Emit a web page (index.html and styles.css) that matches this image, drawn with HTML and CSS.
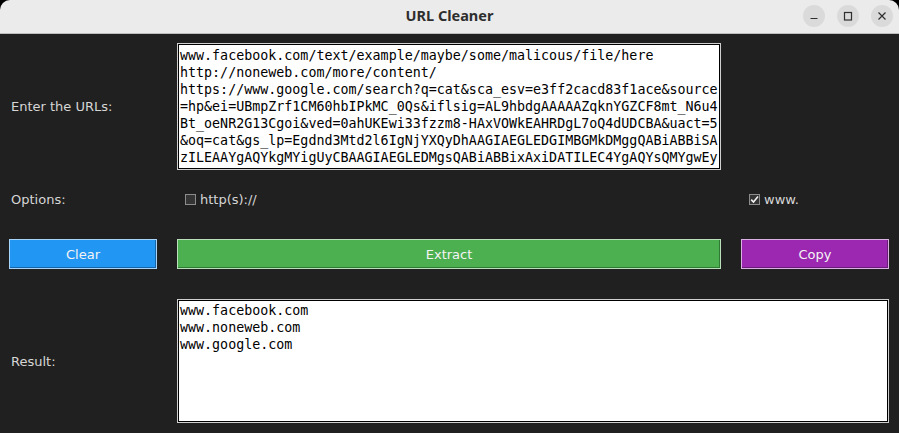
FILE: index.html
```html
<!DOCTYPE html>
<html lang="en">
<head>
<meta charset="utf-8">
<title>URL Cleaner</title>
<link rel="stylesheet" href="styles.css">
</head>
<body>
<div class="window">
  <header class="titlebar">
    <div class="tb-spacer"></div>
    <div class="tb-title">URL Cleaner</div>
    <div class="tb-controls">
      <span class="tb-btn"><svg width="22" height="22" viewBox="0 0 22 22"><line x1="7.5" y1="13.5" x2="14.5" y2="13.5" stroke="#2e2e2e" stroke-width="1.2"/></svg></span>
      <span class="tb-btn"><svg width="22" height="22" viewBox="0 0 22 22"><rect x="7.5" y="7.5" width="7" height="7.5" fill="none" stroke="#2e2e2e" stroke-width="1.2"/></svg></span>
      <span class="tb-btn"><svg width="22" height="22" viewBox="0 0 22 22"><path d="M7.5 7.5 L14.5 14.5 M14.5 7.5 L7.5 14.5" stroke="#2e2e2e" stroke-width="1.2" fill="none"/></svg></span>
    </div>
  </header>
  <main class="app">
    <div class="row row-input">
      <div class="label">Enter the URLs:</div>
      <div class="textbox input-box">www.facebook.com/text/example/maybe/some/malicous/file/here
http://noneweb.com/more/content/
https://www.google.com/search?q=cat&amp;sca_esv=e3ff2cacd83f1ace&amp;source
=hp&amp;ei=UBmpZrf1CM60hbIPkMC_0Qs&amp;iflsig=AL9hbdgAAAAAZqknYGZCF8mt_N6u4
Bt_oeNR2G13Cgoi&amp;ved=0ahUKEwi33fzzm8-HAxVOWkEAHRDgL7oQ4dUDCBA&amp;uact=5
&amp;oq=cat&amp;gs_lp=Egdnd3Mtd2l6IgNjYXQyDhAAGIAEGLEDGIMBGMkDMggQABiABBiSA
zILEAAYgAQYkgMYigUyCBAAGIAEGLEDMgsQABiABBixAxiDATILEC4YgAQYsQMYgwEy</div>
    </div>
    <div class="row row-options">
      <div class="label">Options:</div>
      <label class="check"><span class="box"></span><span>http(s)://</span></label>
      <label class="check"><span class="box checked"><svg width="9" height="9" viewBox="0 0 9 9"><path d="M1.2 4.6 L3.5 7 L8 1.5" stroke="#f2f2f2" stroke-width="1.6" fill="none"/></svg></span><span>www.</span></label>
    </div>
    <div class="row row-buttons">
      <button class="btn btn-clear">Clear</button>
      <button class="btn btn-extract">Extract</button>
      <button class="btn btn-copy">Copy</button>
    </div>
    <div class="row row-result">
      <div class="label">Result:</div>
      <div class="textbox result-box">www.facebook.com
www.noneweb.com
www.google.com</div>
    </div>
  </main>
</div>
</body>
</html>
```
FILE: styles.css
```css
* { box-sizing: border-box; }
html, body { margin: 0; padding: 0; background: #000; }
body { width: 899px; height: 433px; overflow: hidden; }

.window {
  width: 899px;
  height: 433px;
  background: #202020;
  border-radius: 10px 10px 0 0;
  overflow: hidden;
}

.titlebar {
  height: 34px;
  background: #ebebeb;
  border-bottom: 1px solid #bdbdbd;
  display: grid;
  grid-template-columns: 1fr auto 1fr;
  align-items: center;
}
.tb-title {
  font-family: "Noto Sans", "DejaVu Sans", sans-serif;
  font-weight: 700;
  font-size: 14.5px;
  color: #2e2e2e;
  padding-bottom: 3px;
}
.tb-controls {
  display: flex;
  justify-content: flex-end;
  gap: 12px;
  padding-right: 6px;
  padding-bottom: 2px;
}
.tb-btn {
  width: 22px;
  height: 22px;
  border-radius: 50%;
  background: #dadada;
  display: flex;
}

.app {
  padding: 9px 10px 0 9px;
  font-family: "DejaVu Sans", sans-serif;
  font-size: 13px;
  color: #d6d6d6;
}
.row {
  display: grid;
  grid-template-columns: 148px 544px 148px;
  column-gap: 20px;
  align-items: center;
}
.label { padding-left: 2px; }

.textbox {
  background: #fff;
  border: 1px solid #cfcfcf;
  box-shadow: inset 0 0 0 1px #000;
  padding: 2px 2px;
  font-family: "DejaVu Sans Mono", monospace;
  font-size: 13.33px;
  line-height: 17px;
  color: #000;
  white-space: pre;
  overflow: hidden;
}
.input-box { height: 127px; padding-top: 3px; }
.row-result { margin-top: 30px; }
.result-box { grid-column: 2 / 4; height: 124px; padding-top: 2px; }

.row-options { height: 27px; margin-top: 16px; }
.check {
  display: flex;
  align-items: center;
  gap: 4px;
  padding-left: 8px;
}
.box {
  width: 11px;
  height: 11px;
  border: 1px solid #8c8c8c;
  background: #343434;
  display: flex;
  align-items: center;
  justify-content: center;
}

.row-buttons { margin-top: 26px; }
.btn {
  height: 30px;
  font-family: "DejaVu Sans", sans-serif;
  font-size: 13px;
  color: #f4f4f4;
  padding: 0;
  border: 1px solid;
}
.btn-clear {
  background: #2196f3;
  border-color: #a8d4fa;
  box-shadow: inset -1px -1px 0 #1565a8;
}
.btn-extract {
  background: #4caf50;
  border-color: #b9dfbb;
  box-shadow: inset -1px -1px 0 #2e7a32;
}
.btn-copy {
  background: #9c27b0;
  border-color: #dbb1e3;
  box-shadow: inset -1px -1px 0 #6a1a78;
}
```
